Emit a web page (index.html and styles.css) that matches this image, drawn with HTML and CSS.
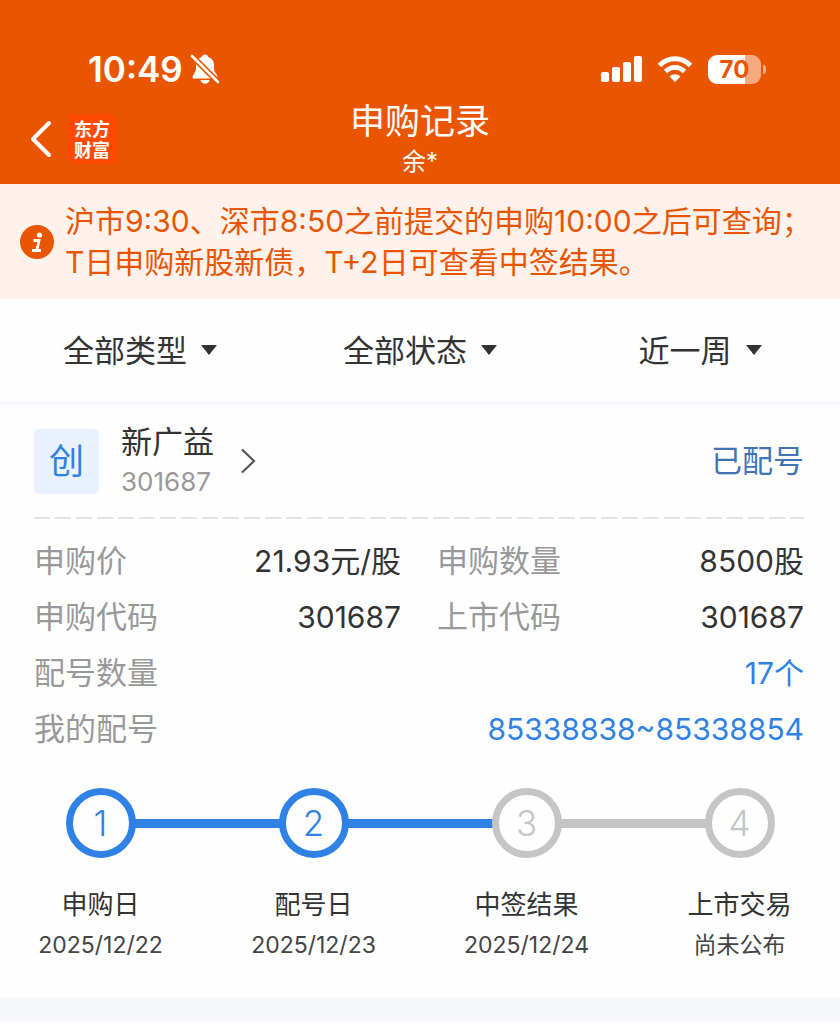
FILE: index.html
```html
<!DOCTYPE html>
<html lang="zh-CN">
<head>
    <meta charset="UTF-8">
    <meta name="viewport" content="width=device-width, initial-scale=1.0">
    <title>申购记录</title>
    <link rel="stylesheet" href="styles.css">
</head>
<body>
    <header class="header">
        <!-- Status bar -->
        <div class="status-bar">
            <div class="status-left">
                <span class="time">10:49</span>
                <svg class="bell" width="30" height="32" viewBox="0 0 30 32" aria-hidden="true">
                    <path d="M15 1.500c-1.800 0-3 1-3.300 2.500C8 5.200 6 8 6 12v4.500c0 2.500-3.500 5-3.500 7.500 0 1 .7 1.500 2 1.500h21c1.300 0 2-.5 2-1.500 0-2.500-3.500-5-3.500-7.500V12c0-4-2-6.800-5.700-8C18 2.500 16.800 1.500 15 1.500z" fill="#fff"/>
                    <path d="M10.500 27h9c-.6 2.500-2.300 3.800-4.500 3.800s-3.900-1.300-4.500-3.800z" fill="#fff"/>
                    <path d="M2 3L28 29" stroke="#ea5502" stroke-width="6"/>
                    <path d="M2 3L28 29" stroke="#fff" stroke-width="2.600" stroke-linecap="round"/>
                </svg>
            </div>
            <div class="status-right">
                <svg width="42" height="28" viewBox="0 0 42 28" fill="#fff" aria-hidden="true">
                    <rect x="1" y="17" width="8" height="10" rx="2"/>
                    <rect x="12" y="12" width="8" height="15" rx="2"/>
                    <rect x="23" y="7" width="8" height="20" rx="2"/>
                    <rect x="34" y="1" width="8" height="26" rx="2"/>
                </svg>
                <svg width="36" height="28" viewBox="0 0 36 28" aria-hidden="true">
                    <path d="M2.500 10.500C11 1.500 25 1.500 33.500 10.500" fill="none" stroke="#fff" stroke-width="5"/>
                    <path d="M8.500 16.500c5.500-5.500 13.500-5.500 19 0" fill="none" stroke="#fff" stroke-width="4.600"/>
                    <path d="M18 27l-5.500-5.500c3-3 8-3 11 0z" fill="#fff"/>
                </svg>
                <div class="battery">
                    <span class="battery-body">70</span>
                    <span class="battery-tip"></span>
                </div>
            </div>
        </div>

        <!-- Navigation -->
        <nav class="nav">
            <div class="nav-left">
                <a class="back" href="#" aria-label="返回">
                    <svg width="24" height="38" viewBox="0 0 24 38" aria-hidden="true">
                        <path d="M19 3L3 19l16 16" fill="none" stroke="#fff" stroke-width="4" stroke-linecap="round" stroke-linejoin="round"/>
                    </svg>
                </a>
                <a class="logo" href="#">东方<br>财富</a>
            </div>
            <div class="nav-title">
                <h1>申购记录</h1>
                <p>余*</p>
            </div>
        </nav>
    </header>

    <section class="notice">
        <svg width="34" height="34" viewBox="0 0 34 34" aria-hidden="true">
            <circle cx="17" cy="17" r="17" fill="#ea5502"/>
            <circle cx="19.500" cy="10" r="2.600" fill="#fff"/>
            <path d="M13.500 15.500h5.500l-2 9.500M12 25.500h9" fill="none" stroke="#fff" stroke-width="2.800"/>
        </svg>
        <p>沪市9:30、深市8:50之前提交的申购10:00之后可查询；<br>T日申购新股新债，T+2日可查看中签结果。</p>
    </section>

    <!-- Filters -->
    <form class="filters">
        <label class="filter">
            <select name="type" aria-label="类型"><option>全部类型</option></select>
            <span class="arrow"></span>
        </label>
        <label class="filter">
            <select name="status" aria-label="状态"><option>全部状态</option></select>
            <span class="arrow"></span>
        </label>
        <label class="filter">
            <select name="period" aria-label="时间"><option>近一周</option></select>
            <span class="arrow"></span>
        </label>
    </form>

    <main class="card">
        <div class="card-head">
            <span class="board">创</span>
            <a class="stock" href="#">
                <span class="stock-text">
                    <span class="stock-name">新广益</span>
                    <span class="stock-code">301687</span>
                </span>
                <svg width="16" height="26" viewBox="0 0 16 26" aria-hidden="true">
                    <path d="M2 1.500L14 13 2 24.500" fill="none" stroke="#555" stroke-width="2.200"/>
                </svg>
            </a>
            <span class="state">已配号</span>
        </div>

        <hr class="divider">

        <dl class="details">
            <div class="row"><dt>申购价</dt><dd>21.93元/股</dd></div>
            <div class="row"><dt>申购数量</dt><dd>8500股</dd></div>
            <div class="row"><dt>申购代码</dt><dd>301687</dd></div>
            <div class="row"><dt>上市代码</dt><dd>301687</dd></div>
            <div class="row wide"><dt>配号数量</dt><dd><a href="#">17个</a></dd></div>
            <div class="row wide"><dt>我的配号</dt><dd><a href="#">85338838~85338854</a></dd></div>
        </dl>

        <!-- Progress -->
        <ol class="steps">
            <li class="step done">
                <span class="dot">1</span>
                <span class="step-name">申购日</span>
                <span class="step-date">2025/12/22</span>
            </li>
            <li class="step done">
                <span class="dot">2</span>
                <span class="step-name">配号日</span>
                <span class="step-date">2025/12/23</span>
            </li>
            <li class="step">
                <span class="dot">3</span>
                <span class="step-name">中签结果</span>
                <span class="step-date">2025/12/24</span>
            </li>
            <li class="step">
                <span class="dot">4</span>
                <span class="step-name">上市交易</span>
                <span class="step-date">尚未公布</span>
            </li>
        </ol>
    </main>
    <div class="page-gap"></div>
</body>
</html>
```
FILE: styles.css
```css
* {
    box-sizing: border-box;
}
body {
    margin: 0;
    background-color: #fefefe;
    color: #333;
    font-family: Inter, "Noto Sans CJK SC", sans-serif;
    font-size: 30px;
    font-weight: 400;
}
h1, p, dl, dd, ol {
    margin: 0;
    padding: 0;
}
a {
    color: inherit;
    text-decoration: none;
}
svg {
    display: block;
    flex: none;
}

/* Header */
.header {
    background-color: #ea5502;
    color: #fff;
    padding-top: 44px;
}
.status-bar {
    display: flex;
    justify-content: space-between;
    align-items: center;
    height: 50px;
    padding: 0 74px 0 88px;
}
.status-left {
    display: flex;
    align-items: center;
    gap: 7px;
}
.time {
    font-size: 35px;
    font-weight: 600;
    line-height: 50px;
}
.status-right {
    display: flex;
    align-items: center;
    gap: 15px;
}
.battery {
    display: flex;
    align-items: center;
    gap: 2px;
}
.battery-body {
    width: 53px;
    height: 29px;
    border-radius: 9px;
    background: linear-gradient(to right, #fff 70%, #f5aa80 70%);
    color: #ea5502;
    font-size: 24px;
    font-weight: 700;
    line-height: 29px;
    text-align: center;
}
.battery-tip {
    width: 3px;
    height: 9px;
    border-radius: 0 3px 3px 0;
    background-color: #f5aa80;
}
.nav {
    display: grid;
    grid-template-columns: 1fr auto 1fr;
    align-items: center;
    height: 90px;
    padding: 0 30px;
}
.nav-left {
    display: flex;
    align-items: center;
    gap: 13px;
}
.logo {
    width: 50px;
    height: 50px;
    padding-top: 4px;
    border-radius: 9px;
    background-color: #ff4a04;
    font-family: "Noto Sans CJK SC", sans-serif;
    font-size: 18px;
    font-weight: 700;
    line-height: 21px;
    text-align: center;
}
.nav-title {
    text-align: center;
}
.nav-title h1 {
    font-size: 35px;
    font-weight: 400;
    line-height: 46px;
}
.nav-title p {
    font-size: 24px;
    line-height: 36px;
}

/* Notice */
.notice {
    display: flex;
    align-items: center;
    gap: 11px;
    padding: 17px 8px 16px 20px;
    background-color: #fff2ed;
    color: #ea5502;
    line-height: 41px;
}

/* Filters */
.filters {
    display: grid;
    grid-template-columns: repeat(3, 1fr);
    height: 106px;
    border-bottom: 4px solid #f6f7fa;
}
.filter {
    display: flex;
    justify-content: center;
    align-items: center;
    gap: 14px;
}
.filter select {
    appearance: none;
    padding: 0;
    border: none;
    background: none;
    color: #333;
    font: inherit;
    font-size: 31px;
    cursor: pointer;
}
.arrow {
    border: 8px solid transparent;
    border-top: 10px solid #333;
    border-bottom: 0;
}

/* Card */
.card {
    padding: 0 36px 0 34px;
    background-color: #fefefe;
}
.card-head {
    display: flex;
    align-items: center;
    height: 112px;
}
.board {
    width: 65px;
    height: 65px;
    margin-right: 22px;
    border-radius: 5px;
    background-color: #e8f1fc;
    color: #3081e5;
    font-size: 35px;
    line-height: 65px;
    text-align: center;
}
.stock {
    display: flex;
    align-items: center;
    gap: 26px;
}
.stock-text {
    display: flex;
    flex-direction: column;
}
.stock-name {
    font-size: 31px;
    line-height: 42px;
}
.stock-code {
    color: #999;
    font-size: 26px;
    line-height: 38px;
}
.state {
    margin-left: auto;
    color: #4273b5;
    font-size: 31px;
    line-height: 42px;
}
.divider {
    height: 2px;
    margin: 0;
    border: none;
    background: repeating-linear-gradient(to right, #e2e2e2 0 16px, transparent 16px 21px);
}
.details {
    display: grid;
    grid-template-columns: 1fr 1fr;
    column-gap: 36px;
    padding-top: 14px;
    line-height: 56px;
}
.row {
    display: flex;
    justify-content: space-between;
}
.wide {
    grid-column: 1 / -1;
}
dt {
    color: #999;
    font-size: 31px;
}
dd a {
    color: #3081e5;
}

/* Progress */
.steps {
    display: grid;
    grid-template-columns: repeat(4, 1fr);
    margin: 0 -42px 0 -40px;
    padding: 31px 0 33px;
    list-style: none;
}
.step {
    position: relative;
    display: flex;
    flex-direction: column;
    align-items: center;
}
/* Line to the next step, runs under the circles */
.step:not(:last-child)::before {
    content: "";
    position: absolute;
    top: 31px;
    left: 50%;
    width: 100%;
    height: 9px;
    background-color: #c5c5c5;
}
.done:not(:last-child)::before {
    background-color: #3081e5;
}
.dot {
    position: relative;
    z-index: 1;
    width: 70px;
    height: 70px;
    margin-bottom: 26px;
    border: 7px solid #c5c5c5;
    border-radius: 50%;
    background-color: #fefefe;
    color: #c5c5c5;
    font-size: 35px;
    font-weight: 300;
    line-height: 56px;
    text-align: center;
}
.done .dot {
    border-color: #3081e5;
    color: #3081e5;
}
.step-name {
    font-size: 26px;
    line-height: 42px;
}
.step-date {
    color: #444;
    font-size: 23px;
    line-height: 38px;
}
.page-gap {
    height: 24px;
    background-color: #f6f7fa;
}
```
